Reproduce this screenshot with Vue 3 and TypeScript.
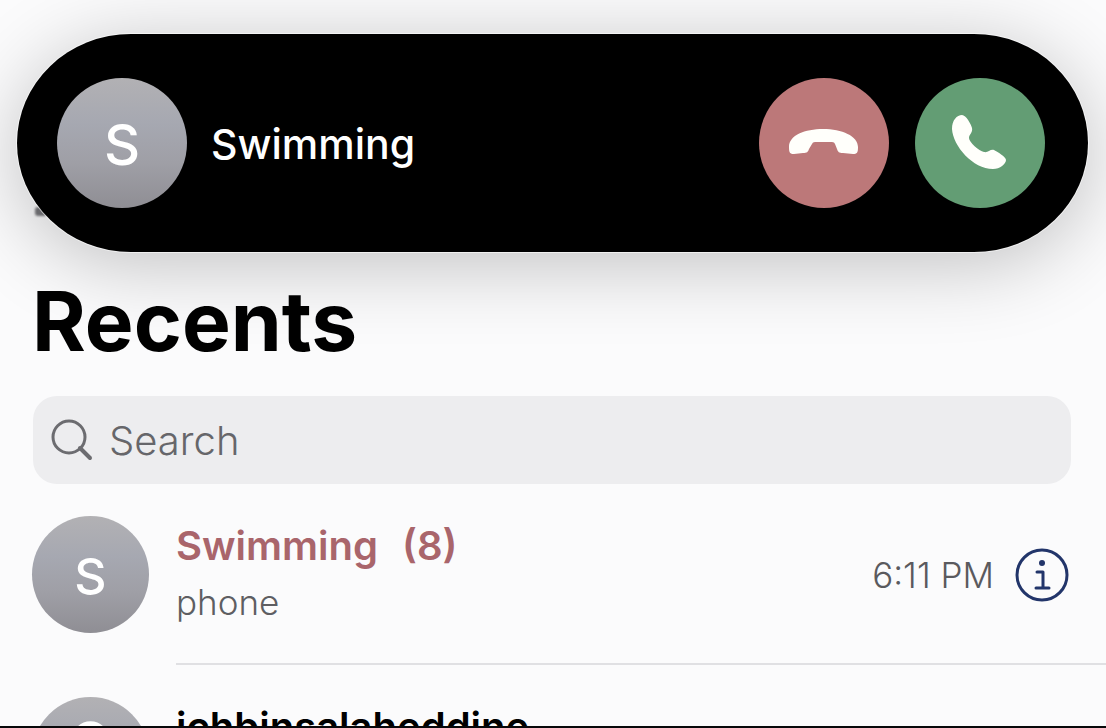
<script setup lang="ts">
import { ref } from 'vue'

interface RecentCall {
  id: number
  name: string
  count?: string
  initial?: string
  source: string
  time: string
  missed: boolean
}

const caller = 'Swimming'
const query = ref('')
const calls: RecentCall[] = [
  { id: 1, name: 'Swimming', count: '(8)', initial: 'S', source: 'phone', time: '6:11 PM', missed: true },
  { id: 2, name: 'ichbinsalaheddine', source: '', time: '', missed: false },
]
</script>

<template>
  <div class="screen">
    <section class="island" aria-label="Incoming call">
      <span class="avatar avatar-large">S</span>
      <span class="caller">{{ caller }}</span>
      <button class="round decline" type="button" aria-label="Decline">
        <svg viewBox="-1 -2 90 90" aria-hidden="true">
          <path d="M9 47C9 35 25 29 43 29C62 29 78 36 78 47C78 53 77 54 73 54L63 53C59 53 58 52 57 49L55 44C54 42 53 42 50 42H37C34 42 33 42 32 44L29 49C28 52 27 53 23 53L14 54C10 54 9 53 9 47Z" />
        </svg>
      </button>
      <button class="round accept" type="button" aria-label="Accept">
        <svg viewBox="-5 -2 90 90" aria-hidden="true">
          <path d="M22 15C17 15 12 20 12 29C13 46 33 69 53 69C60 69 66 64 66 60C66 57 58 52 54 50C50 49 48 53 44 52C39 51 29 42 29 38C29 34 33 33 32 28C31 24 26 15 22 15Z" />
        </svg>
      </button>
    </section>

    <main>
      <h1>Recents</h1>
      <label class="search">
        <svg viewBox="0 0 42 42" aria-hidden="true">
          <circle cx="18" cy="18" r="16" />
          <path d="M29 29L39 39" class="handle" />
        </svg>
        <input v-model="query" type="search" placeholder="Search" aria-label="Search" />
      </label>

      <ul class="calls">
        <li v-for="call in calls" :key="call.id" class="call">
          <span class="avatar">
            <template v-if="call.initial">{{ call.initial }}</template>
            <svg v-else viewBox="0 0 116 116" aria-hidden="true">
              <circle cx="58" cy="41" r="18" />
              <path d="M22 98C24 76 40 66 58 66S92 76 94 98Z" />
            </svg>
          </span>
          <div class="body">
            <div class="who">
              <div class="name" :class="{ missed: call.missed }">
                <span>{{ call.name }}</span>
                <span v-if="call.count">{{ call.count }}</span>
              </div>
              <div class="source">{{ call.source }}</div>
            </div>
            <time v-if="call.time">{{ call.time }}</time>
            <button v-if="call.time" class="info" type="button" aria-label="Call details">
              <svg viewBox="0 0 54 54" aria-hidden="true">
                <circle class="ring" cx="27" cy="27" r="25" />
                <circle class="dot" cx="27" cy="15" r="3" />
                <path d="M22 24H28V40M21 40H34" />
              </svg>
            </button>
          </div>
        </li>
      </ul>
    </main>
  </div>
</template>

<style>
body {
  margin: 0;
  background: #fbfbfc;
}
</style>

<style scoped>
.screen {
  display: flex;
  flex-direction: column;
  height: 100vh;
  box-sizing: border-box;
  padding-top: 34px;
  overflow: hidden;
  border-bottom: 2px solid #08080a;
  background: #fbfbfc;
  font-family: Inter, "Liberation Sans", sans-serif;
}

.island {
  position: relative;
  display: flex;
  flex: none;
  align-items: center;
  gap: 26px;
  margin: 0 18px 0 17px;
  padding: 44px 43px 44px 40px;
  border-radius: 114px / 109px;
  background: #000;
  box-shadow: 0 0 0 1px rgba(255, 255, 255, 0.6), 0 12px 80px rgba(0, 0, 0, 0.24);
}

/* Edge of the page control that the call banner covers */
.island::before {
  content: "";
  position: absolute;
  left: 18px;
  bottom: 36px;
  z-index: -1;
  width: 12px;
  height: 9px;
  border-radius: 3px;
  background: #77777b;
  filter: blur(1px);
}

.screen {
  position: relative;
  z-index: 0;
}

.island {
  z-index: auto;
}

.avatar {
  display: flex;
  flex: none;
  align-items: center;
  justify-content: center;
  width: 117px;
  height: 117px;
  border-radius: 50%;
  overflow: hidden;
  background: linear-gradient(#b2b1b4, #a6a8b1 35%, #9f9fa6 65%, #8f8e94);
  color: #fff;
  font-size: 50px;
  font-weight: 500;
  line-height: 60px;
}

.call .avatar {
  box-sizing: border-box;
  padding-top: 2px;
}

.avatar-large {
  box-sizing: border-box;
  width: 130px;
  height: 130px;
  padding-top: 4px;
  font-size: 56px;
}

.avatar svg {
  width: 100%;
  fill: #fff;
}

.caller {
  flex: 1;
  margin-left: -2px;
  padding-top: 2px;
  color: #fff;
  font-size: 41px;
  font-weight: 500;
}

button {
  flex: none;
  padding: 0;
  border: 0;
  background: none;
}

.round {
  display: flex;
  align-items: center;
  justify-content: center;
  width: 130px;
  height: 130px;
  border-radius: 50%;
}

.round svg {
  width: 90px;
  height: 90px;
  fill: #fffffb;
}

.decline {
  background: #bc7879;
}

.accept {
  background: #639d74;
}

h1 {
  position: relative;
  margin: 20px 33px 0 32px;
  font-size: 82px;
  font-weight: 700;
  line-height: 100px;
  color: #000;
}

.search {
  display: flex;
  align-items: center;
  gap: 16px;
  height: 88px;
  margin: 24px 35px 0 33px;
  padding: 0 18px;
  border-radius: 24px;
  background: #ededef;
  box-sizing: border-box;
}

.search svg {
  flex: none;
  width: 42px;
  height: 42px;
  fill: none;
  stroke: #6c6c70;
  stroke-width: 3;
}

.search .handle {
  stroke-width: 4;
  stroke-linecap: round;
}

.search input {
  flex: 1;
  min-width: 0;
  padding: 0;
  border: 0;
  outline: 0;
  background: none;
  font: 300 40px Inter, "Liberation Sans", sans-serif;
  color: #4c4c50;
}

.search input::placeholder {
  color: #66666a;
  opacity: 1;
}

.calls {
  margin: 0;
  padding: 0;
  list-style: none;
}

.call {
  display: flex;
  align-items: center;
  gap: 27px;
  padding-left: 32px;
}

.body {
  display: flex;
  flex: 1;
  align-items: center;
  height: 181px;
  box-sizing: border-box;
  padding-top: 2px;
  padding-right: 37px;
  border-bottom: 2px solid #e0e0e3;
}

.who {
  flex: 1;
  padding-bottom: 4px;
}

.name {
  display: flex;
  gap: 24px;
  font-size: 40px;
  font-weight: 600;
  line-height: 58px;
  color: #000;
}

.name.missed {
  color: #a9656b;
}

.source {
  min-height: 54px;
  font-size: 35px;
  font-weight: 300;
  line-height: 54px;
  color: #5e5e62;
}

time {
  font-size: 35px;
  font-weight: 300;
  color: #5a5a5e;
}

.info {
  width: 54px;
  height: 54px;
  margin-left: 21px;
}

.info svg {
  display: block;
  fill: none;
  stroke: #22356a;
  stroke-width: 3;
  stroke-linecap: round;
  stroke-linejoin: round;
}

.info .dot {
  fill: #22356a;
  stroke: none;
}
</style>
